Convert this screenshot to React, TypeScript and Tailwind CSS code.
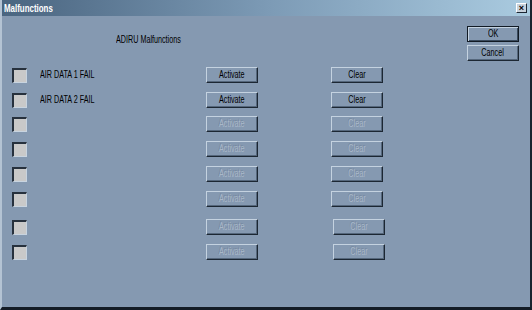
import React from "react";

const rows = [
  { label: "AIR DATA 1 FAIL", enabled: true, gap: "mt-0", clearGap: "ml-[73px]" },
  { label: "AIR DATA 2 FAIL", enabled: true, gap: "mt-[9px]", clearGap: "ml-[73px]" },
  { label: "", enabled: false, gap: "mt-[8px]", clearGap: "ml-[73px]" },
  { label: "", enabled: false, gap: "mt-[9px]", clearGap: "ml-[73px]" },
  { label: "", enabled: false, gap: "mt-[9px]", clearGap: "ml-[73px]" },
  { label: "", enabled: false, gap: "mt-[9px]", clearGap: "ml-[73px]" },
  { label: "", enabled: false, gap: "mt-[12px]", clearGap: "ml-[75px]" },
  { label: "", enabled: false, gap: "mt-[9px]", clearGap: "ml-[75px]" },
];

function Btn({ children, enabled = true, isDefault = false }: { children: React.ReactNode; enabled?: boolean; isDefault?: boolean }) {
  return (
    <div
      className={
        "flex items-center justify-center w-[52px] h-[16px] bg-[#8599b1] " +
        (isDefault
          ? "border border-[#111a24] shadow-[inset_1px_1px_0_#c4d2e0,inset_-1px_-1px_0_#3a4b5e]"
          : "border-t border-l border-t-[#c4d2e0] border-l-[#c4d2e0] border-b border-r border-b-[#1c2733] border-r-[#1c2733] shadow-[inset_-1px_-1px_0_#55677c]")
      }
    >
      <span
        className={
          "inline-block scale-x-[0.72] text-[10px] leading-none " +
          (enabled ? "text-black" : "text-[#a9b8c9] [text-shadow:-1px_-1px_0_#7789a0]")
        }
      >
        {children}
      </span>
    </div>
  );
}

function Check() {
  return (
    <div className="w-[15px] h-[15px] bg-[#c9c9c9] border-t-2 border-l-2 border-t-[#27313d] border-l-[#27313d] border-b border-r border-b-[#c8d4e0] border-r-[#c8d4e0]" />
  );
}

export default function App() {
  return (
    <div
      className="w-[532px] h-[310px] flex flex-col bg-[#8599b1] border-l-2 border-l-[#b4c3d3] border-r-2 border-r-[#1a2430] border-b-[3px] border-b-[#141c26] overflow-hidden"
      style={{ fontFamily: '"Liberation Sans", Arial, sans-serif' }}
    >
      <div className="h-[16px] shrink-0 flex items-center bg-gradient-to-r from-[#4a6580] via-[#7c9ab5] to-[#aacbe0] pl-[2px] pr-[3px]">
        <span className="inline-block origin-left scale-x-[0.72] text-white font-bold text-[11px] leading-none">Malfunctions</span>
        <div className="ml-auto w-[11px] h-[10px] bg-[#c8d2dc] border-t border-l border-t-white border-l-white border-b border-r border-b-[#1c2733] border-r-[#1c2733] flex items-center justify-center text-[9px] leading-none font-bold text-black">
          ×
        </div>
      </div>

      <div className="flex h-[51px] shrink-0">
        <div className="ml-[114px] mt-[18px] w-[100px] text-[10px] leading-[12px] text-black">
          <span className="inline-block origin-left scale-x-[0.72]">ADIRU Malfunctions</span>
        </div>
        <div className="ml-auto mr-[11px] mt-[10px] flex flex-col gap-[3px]">
          <Btn isDefault>OK</Btn>
          <Btn>Cancel</Btn>
        </div>
      </div>

      <div className="flex flex-col">
        {rows.map((r, i) => (
          <div key={i} className={"flex items-center h-[16px] " + r.gap}>
            <div className="ml-[10px]">
              <Check />
            </div>
            <div className="ml-[13px] w-[166px] text-[10px] leading-none text-black">
              <span className="inline-block origin-left scale-x-[0.72]">{r.label}</span>
            </div>
            <Btn enabled={r.enabled}>Activate</Btn>
            <div className={r.clearGap}>
              <Btn enabled={r.enabled}>Clear</Btn>
            </div>
          </div>
        ))}
      </div>
    </div>
  );
}
